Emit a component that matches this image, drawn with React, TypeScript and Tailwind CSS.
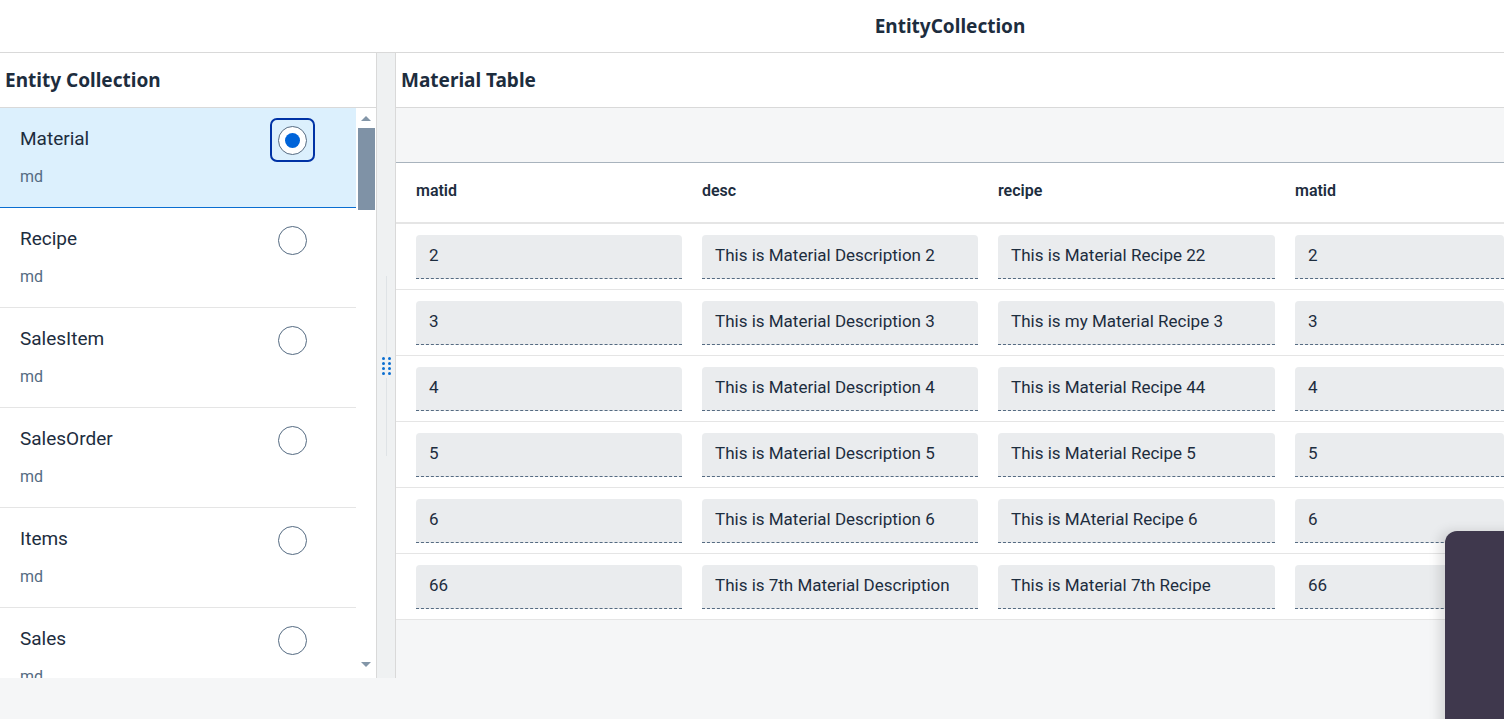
import React from "react";

const entities = ["Material", "Recipe", "SalesItem", "SalesOrder", "Items", "Sales"];

const rows = [
  ["2", "This is Material Description 2", "This is Material Recipe 22", "2"],
  ["3", "This is Material Description 3", "This is my Material Recipe 3", "3"],
  ["4", "This is Material Description 4", "This is Material Recipe 44", "4"],
  ["5", "This is Material Description 5", "This is Material Recipe 5", "5"],
  ["6", "This is Material Description 6", "This is MAterial Recipe 6", "6"],
  ["66", "This is 7th Material Description", "This is Material 7th Recipe", "66"],
];

const cols = ["matid", "desc", "recipe", "matid"];

const titleFont = { fontFamily: "'Noto Sans', Roboto, sans-serif" };

function Radio({ selected }: { selected: boolean }) {
  if (selected) {
    return (
      <div className="w-[45px] h-[44px] rounded-[7px] border-2 border-[#0032a5] flex items-center justify-center">
        <div className="w-[29px] h-[29px] rounded-full border border-[#556b82] bg-white flex items-center justify-center">
          <div className="w-[15px] h-[15px] rounded-full bg-[#0064d9]" />
        </div>
      </div>
    );
  }
  return (
    <div className="w-[45px] h-[44px] flex items-center justify-center">
      <div className="w-[29px] h-[29px] rounded-full border border-[#556b82] bg-white" />
    </div>
  );
}

function EntityItem({ name, selected }: { name: string; selected: boolean }) {
  return (
    <div
      className={`h-[100px] shrink-0 flex justify-between pl-[20px] pr-[41px] border-b ${
        selected ? "bg-[#dcf0fd] border-[#0a6ed1]" : "bg-white border-[#e5e5e5]"
      }`}
    >
      <div className="pt-[19px]">
        <div className="text-[19px] leading-[24px] text-[#1d2d3e]">{name}</div>
        <div className="mt-[16px] text-[16px] leading-[20px] text-[#556b82]">md</div>
      </div>
      <div className="pt-[10px]">
        <Radio selected={selected} />
      </div>
    </div>
  );
}

export default function App() {
  return (
    <div
      className="relative w-[1504px] h-[719px] overflow-hidden bg-[#f5f6f7] text-[#1d2d3e]"
      style={{ fontFamily: "Roboto, 'Noto Sans', sans-serif" }}
    >
      {/* Shell header */}
      <div className="h-[53px] bg-white border-b border-[#d9d9d9] flex items-center">
        <div className="w-[396px] shrink-0" />
        <div className="flex-1 text-center text-[19px] font-bold" style={titleFont}>
          EntityCollection
        </div>
      </div>

      <div className="flex h-[625px]">
        {/* Left panel */}
        <div className="w-[377px] shrink-0 bg-white border-r border-[#d9d9d9] flex flex-col">
          <div
            className="h-[55px] shrink-0 border-b border-[#d9d9d9] flex items-center pl-[5px] text-[19px] font-bold"
            style={titleFont}
          >
            Entity Collection
          </div>
          <div className="flex flex-1 overflow-hidden">
            <div className="w-[356px] shrink-0 flex flex-col overflow-hidden">
              {entities.map((e, i) => (
                <EntityItem key={e} name={e} selected={i === 0} />
              ))}
            </div>
            <div className="w-[20px] flex flex-col items-center">
              <div className="h-[20px] flex items-center justify-center">
                <div className="w-0 h-0 border-x-[5px] border-x-transparent border-b-[5px] border-b-[#8396a8]" />
              </div>
              <div className="w-[17px] h-[82px] bg-[#7f92a6]" />
              <div className="flex-1" />
              <div className="h-[16px] flex items-start justify-center">
                <div className="w-0 h-0 border-x-[5px] border-x-transparent border-t-[5px] border-t-[#8396a8]" />
              </div>
            </div>
          </div>
        </div>

        {/* Splitter */}
        <div className="w-[19px] shrink-0 bg-[#eff1f2] border-r border-[#d9d9d9] flex flex-col items-center justify-center">
          <div className="w-px h-[78px] bg-[#dfe3e6]" />
          <div className="grid grid-cols-2 gap-x-[3px] gap-y-[2px] py-[3px]">
            {Array.from({ length: 8 }).map((_, i) => (
              <div key={i} className="w-[3px] h-[3px] rounded-full bg-[#0a6ed1]" />
            ))}
          </div>
          <div className="w-px h-[78px] bg-[#dfe3e6]" />
        </div>

        {/* Right panel */}
        <div className="flex-1 flex flex-col min-w-0">
          <div
            className="h-[55px] shrink-0 bg-white border-b border-[#d9d9d9] flex items-center pl-[5px] text-[19px] font-bold"
            style={titleFont}
          >
            Material Table
          </div>
          <div className="h-[55px] shrink-0 bg-[#f5f6f7] border-b border-[#a8b3bd]" />
          <div className="h-[61px] shrink-0 bg-white border-b-2 border-[#e5e5e5] grid grid-cols-[266px_276px_277px_1fr] gap-x-[20px] pl-[20px] items-center pb-[4px]">
            {cols.map((c, i) => (
              <div key={i} className="text-[16px] font-semibold text-[#1d2d3e]">
                {c}
              </div>
            ))}
          </div>
          {rows.map((r, ri) => (
            <div
              key={ri}
              className="h-[66px] shrink-0 bg-white border-b border-[#e5e5e5] grid grid-cols-[266px_276px_277px_1fr] gap-x-[20px] pl-[20px] pt-[11px]"
            >
              {r.map((v, ci) => (
                <div
                  key={ci}
                  className="h-[44px] bg-[#eaecee] rounded-t-[4px] border-b border-dashed border-[#556b82] flex items-center px-[13px] pb-[2px] text-[17px] text-[#1d2d3e] whitespace-nowrap overflow-hidden"
                >
                  {v}
                </div>
              ))}
            </div>
          ))}
        </div>
      </div>

      {/* Overlay panel */}
      <div className="absolute left-[1445px] top-[531px] w-[80px] h-[220px] rounded-tl-[12px] bg-[#3f384d] shadow-[-6px_0_12px_rgba(0,0,0,0.12)]" />
    </div>
  );
}
